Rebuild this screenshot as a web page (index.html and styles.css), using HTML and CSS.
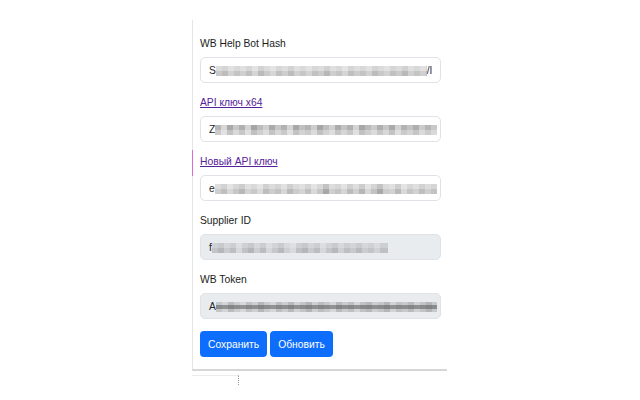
FILE: index.html
```html
<!DOCTYPE html>
<html lang="ru">
<head>
<meta charset="utf-8">
<title>Settings</title>
<link rel="stylesheet" href="styles.css">
</head>
<body>
<div class="panel">
  <div class="group">
    <label class="label">WB Help Bot Hash</label>
    <div class="field"><span class="lead">S</span><span class="mosaic m1"></span><span class="tail">/l</span></div>
  </div>
  <div class="group">
    <a class="label link" href="#">API ключ x64</a>
    <div class="field open"><span class="lead">Z</span><span class="mosaic m2"></span></div>
  </div>
  <div class="group">
    <span class="mark"></span>
    <a class="label link" href="#">Новый API ключ</a>
    <div class="field open"><span class="lead">e</span><span class="mosaic m3"></span></div>
  </div>
  <div class="group">
    <label class="label">Supplier ID</label>
    <div class="field disabled"><span class="lead">f</span><span class="mosaic m4"></span></div>
  </div>
  <div class="group">
    <label class="label">WB Token</label>
    <div class="field disabled open"><span class="lead">A</span><span class="mosaic m5"></span></div>
  </div>
  <div class="actions">
    <button class="btn">Сохранить</button>
    <button class="btn">Обновить</button>
  </div>
</div>
<div class="below"></div>
</body>
</html>
```

FILE: styles.css
```css
html, body {
  margin: 0;
  padding: 0;
  background: #ffffff;
}
body {
  font-family: "Liberation Sans", Arial, sans-serif;
  color: #212529;
}
.panel {
  position: relative;
  margin: 20px 0 0 192px;
  width: 255px;
  box-sizing: border-box;
  padding: 17px 6px 12px 7px;
  border-left: 1px solid #e4e4e4;
  border-bottom: 2px solid #d6d6d6;
  display: flex;
  flex-direction: column;
  gap: 13px;
}
.group {
  display: flex;
  flex-direction: column;
  gap: 6px;
}
.label {
  display: block;
  font-size: 10.3px;
  line-height: 14px;
  color: #1a1d20;
}
.link {
  color: #55219a;
  text-decoration: underline;
  align-self: flex-start;
}
.mark {
  position: absolute;
  left: -1px;
  width: 1px;
  height: 26px;
  margin-top: -5px;
  background: #d96ad6;
}
.field {
  height: 26px;
  box-sizing: border-box;
  border: 1px solid #dfe2e6;
  border-radius: 5px;
  background: #ffffff;
  padding: 0 8px;
  display: flex;
  align-items: center;
  overflow: hidden;
  white-space: nowrap;
  font-size: 10.3px;
}
.field.open {
  padding-right: 3px;
}
.field.disabled {
  background: #e9ecef;
}
.lead, .tail {
  color: #212529;
}
.mosaic {
  display: block;
  height: 10px;
  flex: 1;
  filter: blur(0.7px);
  margin-top: 1px;
}
.m1 {
  background:
    linear-gradient(180deg, rgba(255,255,255,0.35) 0 5px, transparent 5px),
    linear-gradient(90deg,
    #c9c9c9 0 6px, #bdbdbd 6px 12px, #d2d2d2 12px 18px, #c4c4c4 18px 24px,
    #cfcfcf 24px 30px, #c0c0c0 30px 36px, #d4d4d4 36px 42px, #bababa 42px 48px,
    #cacaca 48px 54px, #d6d6d6 54px 60px, #c1c1c1 60px 66px, #cdcdcd 66px 72px,
    #bcbcbc 72px 78px, #d0d0d0 78px 84px, #c6c6c6 84px 90px, #d3d3d3 90px 96px,
    #c2c2c2 96px 102px, #cbcbcb 102px 108px, #b8b8b8 108px 114px, #cecece 114px 120px,
    #c5c5c5 120px 126px, #d5d5d5 126px 132px, #bfbfbf 132px 138px, #cccccc 138px 144px,
    #c3c3c3 144px 150px, #d1d1d1 150px 156px, #bdbdbd 156px 162px, #c8c8c8 162px 168px,
    #d2d2d2 168px 174px, #c0c0c0 174px 180px, #cacaca 180px 186px, #b9b9b9 186px 192px,
    #cfcfcf 192px 198px, #c4c4c4 198px 204px, #d0d0d0 204px 210px, #bbbbbb 210px);
}
.m2 {
  background:
    linear-gradient(180deg, transparent 0 5px, rgba(255,255,255,0.3) 5px),
    linear-gradient(90deg,
    #b5b5b5 0 6px, #d6d6d6 6px 12px, #a9a9a9 12px 18px, #c8c8c8 18px 24px,
    #b0b0b0 24px 30px, #d2d2d2 30px 36px, #a5a5a5 36px 42px, #bcbcbc 42px 48px,
    #cfcfcf 48px 54px, #aaaaaa 54px 60px, #c6c6c6 60px 66px, #b2b2b2 66px 72px,
    #d4d4d4 72px 78px, #a8a8a8 78px 84px, #c0c0c0 84px 90px, #b4b4b4 90px 96px,
    #cdcdcd 96px 102px, #a6a6a6 102px 108px, #bebebe 108px 114px, #d0d0d0 114px 120px,
    #acacac 120px 126px, #c4c4c4 126px 132px, #b1b1b1 132px 138px, #d3d3d3 138px 144px,
    #a7a7a7 144px 150px, #bababa 150px 156px, #cbcbcb 156px 162px, #afafaf 162px 168px,
    #c7c7c7 168px 174px, #a9a9a9 174px 180px, #d1d1d1 180px 186px, #b3b3b3 186px 192px,
    #c2c2c2 192px 198px, #aeaeae 198px 204px, #cccccc 204px 210px, #b6b6b6 210px 216px,
    #c9c9c9 216px);
}
.m3 {
  background:
    linear-gradient(180deg, rgba(255,255,255,0.3) 0 5px, transparent 5px),
    linear-gradient(90deg,
    #cfcfcf 0 6px, #bfbfbf 6px 12px, #d8d8d8 12px 18px, #c6c6c6 18px 24px,
    #b8b8b8 24px 30px, #d3d3d3 30px 36px, #c9c9c9 36px 42px, #dadada 42px 48px,
    #bdbdbd 48px 54px, #cdcdcd 54px 60px, #c3c3c3 60px 66px, #d6d6d6 66px 72px,
    #bababa 72px 78px, #cbcbcb 78px 84px, #d4d4d4 84px 90px, #c1c1c1 90px 96px,
    #d9d9d9 96px 102px, #c7c7c7 102px 108px, #a8a8a8 108px 114px, #cecece 114px 120px,
    #c4c4c4 120px 126px, #d5d5d5 126px 132px, #bcbcbc 132px 138px, #d0d0d0 138px 144px,
    #b6b6b6 144px 150px, #d7d7d7 150px 156px, #c2c2c2 156px 162px, #a9a9a9 162px 168px,
    #cccccc 168px 174px, #d2d2d2 174px 180px, #b9b9b9 180px 186px, #d8d8d8 186px 192px,
    #c5c5c5 192px 198px, #d1d1d1 198px 204px, #bebebe 204px 210px, #cfcfcf 210px 216px,
    #c3c3c3 216px);
}
.m4 {
  flex: 0 0 176px;
  background:
    linear-gradient(180deg, rgba(233,236,239,0.35) 0 5px, transparent 5px),
    linear-gradient(90deg,
    #c2c4c6 0 6px, #b5b7b9 6px 12px, #c9cbcd 12px 18px, #bcbec0 18px 24px,
    #d6d8da 24px 30px, #c0c2c4 30px 36px, #b3b5b7 36px 42px, #cbcdcf 42px 48px,
    #babcbe 48px 54px, #d4d6d8 54px 60px, #c5c7c9 60px 66px, #b7b9bb 66px 72px,
    #cecfd1 72px 78px, #d8dadc 78px 84px, #bfc1c3 84px 90px, #b4b6b8 90px 96px,
    #c8cacc 96px 102px, #bbbdbf 102px 108px, #d5d7d9 108px 114px, #c3c5c7 114px 120px,
    #b6b8ba 120px 126px, #cdcfd1 126px 132px, #bdbfc1 132px 138px, #c7c9cb 138px 144px,
    #b8babc 144px 150px, #caccce 150px 156px, #c1c3c5 156px 162px, #d0d2d4 162px 168px,
    #bec0c2 168px);
}
.m5 {
  background:
    linear-gradient(180deg, transparent 0 3px, rgba(90,90,90,0.55) 3px 7px, transparent 7px),
    linear-gradient(90deg,
    #c4c6c8 0 6px, #d2d4d6 6px 12px, #b9bbbd 12px 18px, #caccce 18px 24px,
    #d6d8da 24px 30px, #bfc1c3 30px 36px, #cdcfd1 36px 42px, #b5b7b9 42px 48px,
    #c8cacc 48px 54px, #d4d6d8 54px 60px, #bcbec0 60px 66px, #cbcdcf 66px 72px,
    #b7b9bb 72px 78px, #d0d2d4 78px 84px, #c2c4c6 84px 90px, #b3b5b7 90px 96px,
    #cecfd1 96px 102px, #bbbdbf 102px 108px, #c6c8ca 108px 114px, #d5d7d9 114px 120px,
    #b8babc 120px 126px, #c9cbcd 126px 132px, #bdbfc1 132px 138px, #d3d5d7 138px 144px,
    #c0c2c4 144px 150px, #b6b8ba 150px 156px, #cccecf 156px 162px, #c3c5c7 162px 168px,
    #b4b6b8 168px 174px, #d1d3d5 174px 180px, #bec0c2 180px 186px, #c7c9cb 186px 192px,
    #b9bbbd 192px 198px, #cfd1d3 198px 204px, #c1c3c5 204px 210px, #b2b4b6 210px 216px,
    #c6c8ca 216px);
}
.actions {
  display: flex;
  gap: 3px;
  margin-top: -1px;
}
.btn {
  font-family: "Liberation Sans", Arial, sans-serif;
  font-size: 10.3px;
  height: 26px;
  padding: 0 8px;
  border: none;
  border-radius: 4px;
  background: #0d6efd;
  color: #ffffff;
}
.below {
  margin-left: 192px;
  margin-top: 4px;
  width: 46px;
  height: 9px;
  border-top: 1px solid #ececec;
  border-right: 1px dotted #999999;
}
```
